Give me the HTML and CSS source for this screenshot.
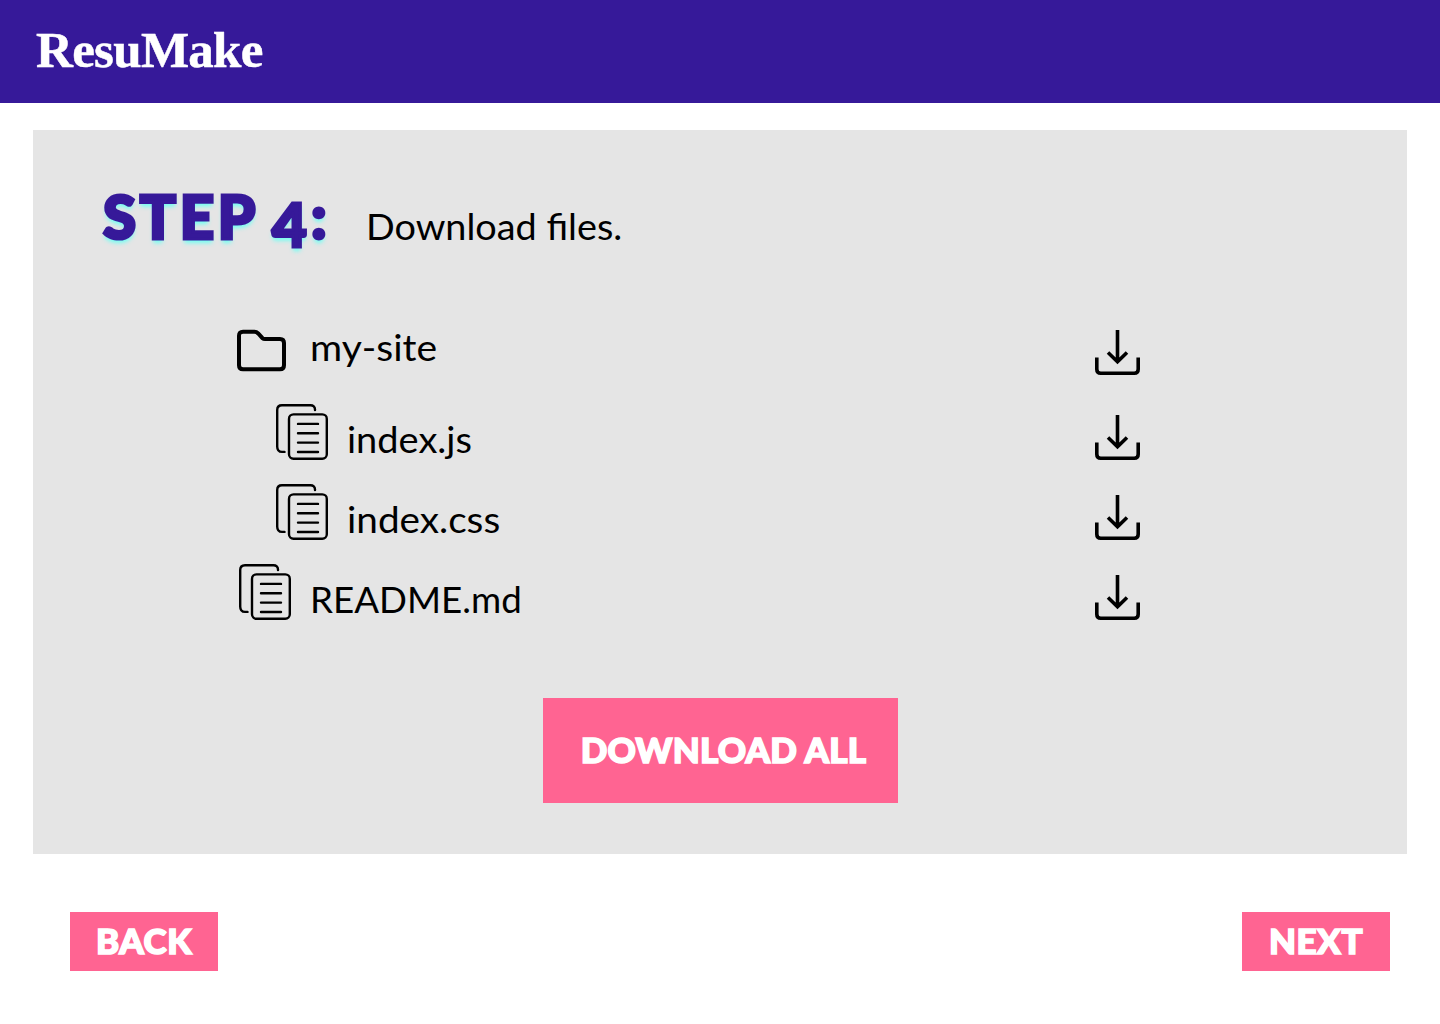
FILE: index.html
```html
<!DOCTYPE html>
<html lang="en">
<head>
<meta charset="utf-8">
<title>ResuMake</title>
<link rel="stylesheet" href="styles.css">
</head>
<body>
<svg class="sprite" aria-hidden="true">
  <symbol id="folder" viewBox="0 0 50 43">
    <path d="M6 2.8H17.5C19.2 2.8 20 3.3 21.2 4.5L25.5 9.2C26.3 9.9 26.8 10 28 10H43C45.7 10 47 11.4 47 14V36.3C47 39 45.7 40.3 43 40.3H6C3.3 40.3 2 39 2 36.3V6.8C2 4.1 3.3 2.8 6 2.8Z" fill="none" stroke="#000" stroke-width="4"/>
  </symbol>
  <symbol id="file" viewBox="0 0 52 56">
    <g fill="none" stroke="#000" stroke-width="2.4" stroke-linecap="round">
      <path d="M39 6V5.5C39 2.8 37.2 1.2 34.5 1.2H6C3 1.2 1.2 3 1.2 6V42.5C1.2 46 3 47.9 6 47.9H8.5"/>
      <rect x="13" y="10.4" width="37.8" height="44.4" rx="4.5"/>
      <path d="M22 19.9H42M22 29.2H42M22 38.6H42M22 48H42"/>
    </g>
  </symbol>
  <symbol id="download" viewBox="0 0 45 45">
    <g fill="none" stroke="#000" stroke-width="3.6">
      <path d="M22.5 0V31M13 22.5L22.5 31.7L32 22.5"/>
      <path d="M1.8 27.5V39.2C1.8 41.8 3.2 43.2 5.8 43.2H39.2C41.8 43.2 43.2 41.8 43.2 39.2V27.5"/>
    </g>
  </symbol>
</svg>
<header class="header"><span class="logo">ResuMake</span></header>
<main class="panel">
  <div class="heading">
    <h1 class="step"><span class="step-word">STEP</span><span class="step-number">4</span><span>:</span></h1>
    <p class="lead">Download files.</p>
  </div>
  <ul class="files">
    <li class="row row-folder">
      <svg class="icon-folder"><use href="#folder"/></svg>
      <span class="name name-folder">my-site</span>
      <svg class="icon-download"><use href="#download"/></svg>
    </li>
    <li class="row row-first nested">
      <svg class="icon-file"><use href="#file"/></svg>
      <span class="name name-js">index.js</span>
      <svg class="icon-download"><use href="#download"/></svg>
    </li>
    <li class="row nested">
      <svg class="icon-file"><use href="#file"/></svg>
      <span class="name name-css">index.css</span>
      <svg class="icon-download"><use href="#download"/></svg>
    </li>
    <li class="row">
      <svg class="icon-file"><use href="#file"/></svg>
      <span class="name name-readme">README.md</span>
      <svg class="icon-download"><use href="#download"/></svg>
    </li>
  </ul>
  <button class="button button-all">DOWNLOAD ALL</button>
</main>
<nav class="nav">
  <button class="button button-back">BACK</button>
  <button class="button button-next">NEXT</button>
</nav>
</body>
</html>
```
FILE: styles.css
```css
* { box-sizing: border-box; }
body {
  margin: 0;
  min-height: 1024px;
  background: #fff;
  color: #000;
  font-family: Lato, "Open Sans", sans-serif;
  font-size: 36px;
}
.sprite { display: none; }
.header {
  height: 103px;
  padding: 18px 36px 0;
  background: #361999;
}
.logo {
  display: block;
  color: #fff;
  font: bold 51px/64px "Liberation Serif", serif;
  letter-spacing: -0.7px;
  -webkit-text-stroke: 0.5px #fff;
}
.panel {
  display: flex;
  flex-direction: column;
  height: 724px;
  margin: 27px 33px 0;
  padding-top: 48px;
  background: #e5e5e5;
}
.heading {
  display: flex;
  align-items: baseline;
  height: 148px;
  padding-left: 70px;
}
.step {
  display: flex;
  align-items: baseline;
  width: 263px;
  margin: 0;
  color: #361999;
  font-size: 60px;
  font-weight: 900;
  line-height: 76px;
  text-shadow: 0 4px 4px #6ffff3;
  -webkit-text-stroke: 3.2px #361999;
}
.step-word { width: 169px; letter-spacing: 3.7px; }
.step-number {
  width: 39px;
  transform: translateY(8px);
}
.lead {
  margin: 0;
  line-height: 42px;
  transform: translateY(1px) scaleX(1.05);
  transform-origin: left;
}
.files {
  width: 904px;
  margin: 0 0 0 203px;
  padding: 0;
  list-style: none;
}
.row {
  display: flex;
  align-items: flex-end;
  height: 80px;
  padding-left: 3px;
}
.row-folder { height: 49px; padding-left: 1px; }
.row-first { height: 85px; }
.nested { padding-left: 40px; }
.icon-folder { width: 50px; height: 43px; margin-bottom: 3px; }
.icon-file { width: 52px; height: 56px; }
.icon-download { width: 45px; height: 45px; margin-left: auto; }
.name { margin-left: 18.5px; line-height: 42px; transform-origin: left; }
.name-folder { margin: 0 0 7px 22.5px; transform: scaleX(1.085); }
.name-js { transform: scaleX(1.055); }
.name-css { transform: scaleX(1.075); }
.name-readme { transform: scaleX(1.02); }
.button {
  padding: 0 0 3px;
  border: 0;
  background: #ff6492;
  color: #fff;
  font: 900 35px/42px Lato, "Open Sans", sans-serif;
  letter-spacing: 0.5px;
  -webkit-text-stroke: 1.6px #fff;
}
.button-all {
  align-self: center;
  width: 355px;
  height: 105px;
  margin-top: 78px;
  padding-left: 7px;
  letter-spacing: 0.2px;
}
.nav {
  display: flex;
  justify-content: space-between;
  padding: 58px 50px 0 70px;
}
.button-back, .button-next { width: 148px; height: 59px; }
```
